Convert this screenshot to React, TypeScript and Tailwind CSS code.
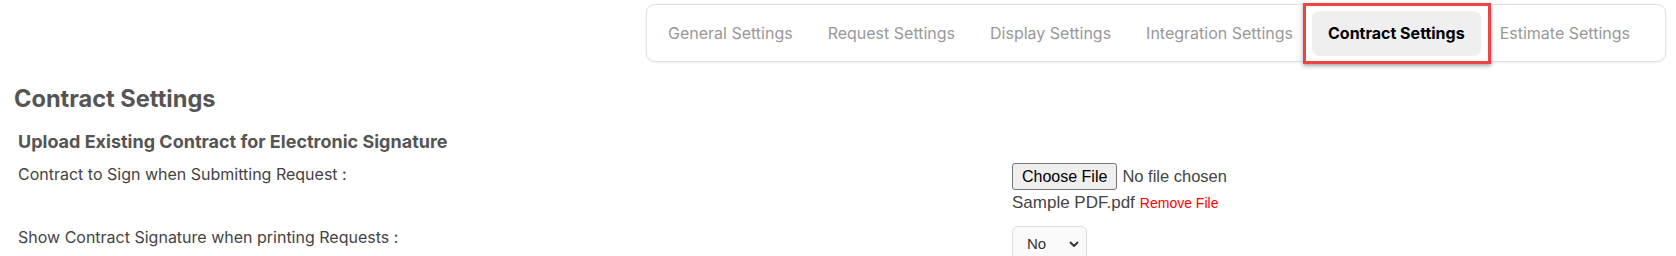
const tabs = [
  "General Settings",
  "Request Settings",
  "Display Settings",
  "Integration Settings",
  "Contract Settings",
  "Estimate Settings",
];

const ACTIVE = "Contract Settings";

function TabBar() {
  return (
    <div className="flex justify-end pr-[10px] pt-[4px]">
      <div className="flex h-[58px] items-center gap-[3px] rounded-[9px] border border-[#e2e2e2] bg-white pl-[5px] pr-[19px] shadow-[0_1px_3px_rgba(0,0,0,0.06)]">
        {tabs.map((t) =>
          t === ACTIVE ? (
            <div key={t} className="relative">
              <div className="flex h-[45px] items-center rounded-[8px] bg-[#efefef] px-[16px] text-[16px] font-bold text-black">
                {t}
              </div>
              <div className="pointer-events-none absolute -bottom-[8px] -left-[9px] -right-[10px] -top-[8px] border-[3px] border-[#ef4444] shadow-[0_2px_4px_rgba(0,0,0,0.35)]" />
            </div>
          ) : (
            <div
              key={t}
              className="flex h-[45px] items-center px-[16px] text-[16px] text-[#999999]"
            >
              {t}
            </div>
          )
        )}
      </div>
    </div>
  );
}

function FilePicker() {
  return (
    <div className="flex flex-col">
      <div className="flex items-center font-['Liberation_Sans',Arial,sans-serif] text-[16px]">
        <button className="h-[27px] rounded-[3px] border border-[#767676] bg-[#efefef] px-[9px] text-black">
          Choose File
        </button>
        <span className="ml-[5px] text-[16.5px] text-[#444]">No file chosen</span>
      </div>
      <div className="mt-[3px] flex items-baseline font-['Liberation_Sans',Arial,sans-serif]">
        <span className="text-[17px] leading-[20px] text-[#444]">Sample PDF.pdf</span>
        <button className="ml-[5px] text-[14px] text-[#ff0000]">Remove File</button>
      </div>
    </div>
  );
}

function YesNoSelect() {
  return (
    <div className="flex h-[36px] w-[75px] items-center justify-between rounded-[6px] border border-[#dddddd] bg-[#fafafa] pl-[14px] pr-[6px] font-['Liberation_Sans',Arial,sans-serif] text-[15px] text-[#333]">
      <span>No</span>
      <svg width="12" height="12" viewBox="0 0 12 12" fill="none">
        <path d="M2.5 4.5 6 8l3.5-3.5" stroke="#333" strokeWidth="1.8" strokeLinecap="round" strokeLinejoin="round" />
      </svg>
    </div>
  );
}

export default function App() {
  return (
    <div className="h-[256px] w-[1676px] overflow-hidden bg-white font-['Inter',sans-serif]">
      <TabBar />

      <h2 className="ml-[14px] mt-[22px] text-[23.6px] font-bold leading-[29px] text-[#555555]">
        Contract Settings
      </h2>

      <div className="px-[18px]">
        <h3 className="mt-[18px] text-[18px] font-bold leading-[22px] text-[#555555]">
          Upload Existing Contract for Electronic Signature
        </h3>

        <div className="mt-[10px] grid grid-cols-[994px_1fr] items-start">
          <div className="pt-[1px] text-[16px] leading-[20px] text-[#444444]">
            Contract to Sign when Submitting Request :
          </div>
          <FilePicker />
        </div>

        <div className="mt-[12px] grid grid-cols-[994px_1fr] items-start">
          <div className="pt-[1px] text-[16px] leading-[20px] text-[#444444]">
            Show Contract Signature when printing Requests :
          </div>
          <YesNoSelect />
        </div>
      </div>
    </div>
  );
}
